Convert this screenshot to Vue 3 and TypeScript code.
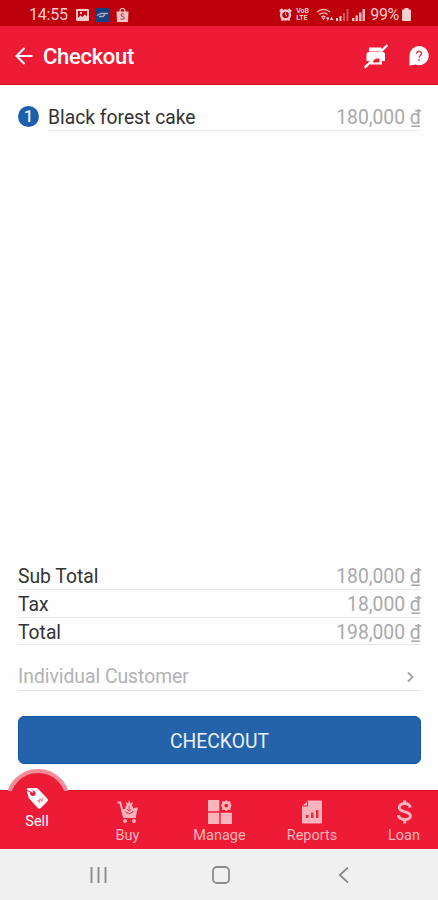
<script setup lang="ts">
interface Row {
  label: string
  amount: string
}

interface Tab {
  id: string
  label: string
}

const totals: Row[] = [
  { label: 'Sub Total', amount: '180,000 ₫' },
  { label: 'Tax', amount: '18,000 ₫' },
  { label: 'Total', amount: '198,000 ₫' },
]

const tabs: Tab[] = [
  { id: 'sell', label: 'Sell' },
  { id: 'buy', label: 'Buy' },
  { id: 'manage', label: 'Manage' },
  { id: 'reports', label: 'Reports' },
  { id: 'loan', label: 'Loan' },
]
</script>

<template>
  <div class="screen">
    <div class="status">
      <span class="time">14:55</span>
      <svg class="s-pic" width="13" height="12" viewBox="0 0 13 12">
        <path fill="#f7c9cb" fill-rule="evenodd" d="M1 0h11a1 1 0 0 1 1 1v10a1 1 0 0 1-1 1H1a1 1 0 0 1-1-1V1a1 1 0 0 1 1-1zM2 2v7l2.500-2.500 2 1.500 2.500-2.500 2 2V2zM4 3h2v2H4z" />
      </svg>
      <svg class="s-app" width="15" height="14" viewBox="0 0 15 14">
        <rect width="15" height="14" rx="1" fill="#17417c" />
        <path d="M2 7.500 6 5.500h7M4 8.500h4l2-2" fill="none" stroke="#b9a9bd" stroke-width="1.300" />
      </svg>
      <svg class="s-bag" width="13" height="14" viewBox="0 0 13 14">
        <path d="M4 4V3a2.500 2.500 0 0 1 5 0v1" fill="none" stroke="#f3c3c5" stroke-width="1.200" />
        <path d="M.5 3.500h12L12 14H1z" fill="#f3c3c5" />
        <path d="M8.300 6.300C7 5.200 4.700 5.700 5 7.200c.3 1.400 3.300 1 3.200 2.800-.1 1.500-2.500 1.700-3.700.6" fill="none" stroke="#c4424b" stroke-width="1.100" />
      </svg>
      <span class="grow" />
      <svg class="s-alarm" width="13" height="13" viewBox="0 0 13 13">
        <circle cx="6.500" cy="7" r="4.500" fill="none" stroke="#f7c9cb" stroke-width="2.400" />
        <path d="M.8 3.500 3.500 1M12.200 3.500 9.500 1M2.500 12.500l1.500-2M10.500 12.500l-1.500-2" stroke="#f7c9cb" stroke-width="2" />
        <path d="M6.500 4.500V7l1.500 1" fill="none" stroke="#f7c9cb" />
      </svg>
      <span class="volte"><span>VoB</span><span>LTE</span></span>
      <svg class="s-wifi" width="18" height="14" viewBox="0 0 18 14">
        <g fill="none" stroke="#f0b2b6" stroke-width="1.500">
          <path d="M1 4a10 10 0 0 1 13 0M3.300 6.500a6.500 6.500 0 0 1 8.400 0M5.500 9a3.500 3.500 0 0 1 4 0" />
        </g>
        <path d="M7.500 12.500 5.500 9.500h4z" fill="#f0b2b6" />
        <path d="M10 9.500h3.500L11.800 13zM14 12l1.500-3.500L17.500 12z" fill="#f7c9cb" />
      </svg>
      <svg class="s-sig" width="13" height="12" viewBox="0 0 13 12">
        <path d="M0 9h2v3H0zM3.500 7h2v5h-2z" fill="#f7c9cb" />
        <path d="M7 4h2v8H7zM10.500 0h2v12h-2z" fill="#d8505a" />
      </svg>
      <svg class="s-sig2" width="13" height="12" viewBox="0 0 13 12">
        <path d="M0 9h2.500v3H0zM3.500 6.500H6V12H3.500zM7 3.500h2.500V12H7zM10.500 0H13v12h-2.500z" fill="#f1b4b8" />
      </svg>
      <span class="pct">99%</span>
      <svg class="s-bat" width="9" height="13" viewBox="0 0 9 13">
        <path d="M2.500 0h4v1.500H8a1 1 0 0 1 1 1V12a1 1 0 0 1-1 1H1a1 1 0 0 1-1-1V2.500a1 1 0 0 1 1-1h1.500z" fill="#f9d0d1" />
      </svg>
    </div>

    <header class="bar">
      <svg class="back" width="18" height="18" viewBox="0 0 18 18">
        <path d="M17.500 9H1.500M9.500 1 1.500 9l8 8" fill="none" stroke="#fff" stroke-width="2" />
      </svg>
      <h1>Checkout</h1>
      <span class="grow" />
      <svg class="printer" width="24" height="25" viewBox="0 0 24 25">
        <path d="M5 3.500h13v4H5z" fill="#fff" />
        <path d="M5 8h13.500A2.500 2.500 0 0 1 21 10.500V17h-3v3.500H6V17H2.500v-6.500A2.500 2.500 0 0 1 5 8z" fill="#fff" />
        <path d="M9 18.500c0-2.500 1.500-4 4-4h2.500v4z" fill="#ed1b35" />
        <path d="M17.500 4.500 21 1" stroke="#ed1b35" stroke-width="1.500" />
        <path d="M.7 23.700 23.500 1" stroke="#fff" stroke-width="2.300" />
      </svg>
      <svg class="help" width="20" height="20" viewBox="0 0 20 20">
        <path d="M10 0a9.600 9.600 0 1 1-3.500 18.500L.5 19.500V10A9.500 9.500 0 0 1 10 0z" fill="#fff" />
        <path d="M7.500 7.700C7.500 4.300 12.700 4.500 12.500 7.600c-.1 1.800-2.500 2-2.500 4.200M10 13.300v1.800" fill="none" stroke="#e0475a" stroke-width="1.500" />
      </svg>
    </header>

    <main class="content">
      <div class="item">
        <span class="qty">1</span>
        <div class="item-line">
          <span>Black forest cake</span>
          <span class="amount">180,000 ₫</span>
        </div>
      </div>

      <div class="totals">
        <div v-for="row in totals" :key="row.label" class="row">
          <span>{{ row.label }}</span>
          <span class="amount">{{ row.amount }}</span>
        </div>
      </div>

      <div class="customer">
        <span>Individual Customer</span>
        <svg width="7" height="12" viewBox="0 0 7 12">
          <path d="M1 1.500 5.500 6 1 10.500" fill="none" stroke="#a2a2a2" stroke-width="1.800" />
        </svg>
      </div>

      <button class="checkout" type="button">CHECKOUT</button>
    </main>

    <nav class="tabs">
      <div class="bump"><span class="disc" /></div>
      <div v-for="tab in tabs" :key="tab.id" class="tab" :class="{ active: tab.id === 'sell' }">
        <svg v-if="tab.id === 'sell'" width="24" height="24" viewBox="0 0 24 24">
          <path d="M3 2 11 2a3 3 0 0 1 2 .8L22.300 12.500a2.200 2.200 0 0 1 0 3L15.800 22a2.200 2.200 0 0 1-3 0L4.500 13a4 4 0 0 1-1-2.200L1.500 4z" fill="#fff" />
          <circle cx="7.800" cy="7.300" r="2.700" fill="#ed1b35" />
          <path d="M.5 4 7.500 6.300" stroke="#ed1b35" stroke-width="1.200" />
          <path d="M2 2.700 8.300 6.200" stroke="#fff" stroke-width="1.200" />
          <path d="m12.500 14 1.800 2 .7-3 2 2 .5-3" fill="none" stroke="#ee8c99" stroke-width="1.300" />
        </svg>
        <svg v-else-if="tab.id === 'buy'" width="24" height="24" viewBox="0 0 24 24">
          <path d="M1.500 2.500h2.800l3.600 14.500H20" fill="none" stroke="#fbb4bb" stroke-width="1.900" />
          <path d="M5 9h4.500l1 3.500 2 1 4-1L17.500 8l4.500-.5L20 16H7z" fill="#fbb4bb" />
          <path d="M10.500 5.500a4 4.300 0 1 0 5.500 0L17 2l-2.300 1.500L13 0l-.8 3.500L10 2z" fill="#fbb4bb" />
          <path d="M13.200 5.500v5M11 9l2.200 2.200L15.400 9M9.300 11.500c2 3 6 3 8-.5" fill="none" stroke="#ed3d51" stroke-width="1" />
          <circle cx="9" cy="21" r="2" fill="#fbb4bb" /><circle cx="18" cy="21" r="2" fill="#fbb4bb" />
        </svg>
        <svg v-else-if="tab.id === 'manage'" width="24" height="24" viewBox="0 0 24 24">
          <path d="M0 0h11.300v11.300H0zM0 12.700h11.300V24H0zM12.700 12.700H24V24H12.700z" fill="#fbb4bb" />
          <path d="m18.300 0 1.700 1.500 2.300-.2.300 2.400 1 1.900-1 1.900-.3 2.400-2.300-.2-1.700 1.500-1.700-1.500-2.300.2-.3-2.400-1-1.900 1-1.900.3-2.400 2.300.2z" fill="#fbb4bb" />
          <circle cx="18.300" cy="5.600" r="1.900" fill="#ed1b35" />
        </svg>
        <svg v-else-if="tab.id === 'reports'" width="24" height="24" viewBox="0 0 24 24">
          <path d="M8 .5h13a1 1 0 0 1 1 1v21a1 1 0 0 1-1 1H3a1 1 0 0 1-1-1V6.500z" fill="#fbb4bb" />
          <path d="M7.500 1.500v4.500H3" fill="none" stroke="#ed1b35" stroke-width="1" />
          <path d="M6 15h2.500v3H6zM11 12.500h2.500V18H11zM16 10h2.500v8H16z" fill="#ed2c43" />
        </svg>
        <svg v-else width="24" height="26" viewBox="0 0 24 26">
          <path d="M18.700 8.300C18.300 2.200 6.800 2.700 6.800 8.200c0 6 12.200 3.300 12.200 9 0 5.700-12.700 5.300-13-.8M12.700.5v4M12.700 21v4.500" fill="none" stroke="#fbb4bb" stroke-width="3.200" />
        </svg>
        <span class="tab-label">{{ tab.label }}</span>
      </div>
    </nav>

    <div class="system">
      <svg width="17" height="18" viewBox="0 0 17 18">
        <path d="M1.500 1v16M8.500 1v16M15.500 1v16" stroke="#8c8c8c" stroke-width="1.900" />
      </svg>
      <svg class="home" width="18" height="18" viewBox="0 0 18 18">
        <rect x="1" y="1" width="16" height="16" rx="4" fill="none" stroke="#8c8c8c" stroke-width="1.800" />
      </svg>
      <svg width="11" height="18" viewBox="0 0 11 18">
        <path d="M10 1.500 1.800 9l8.200 7.500" fill="none" stroke="#8c8c8c" stroke-width="1.800" />
      </svg>
    </div>
  </div>
</template>

<style>
body {
  margin: 0;
}
</style>

<style scoped>
.screen {
  width: 438px;
  height: 900px;
  overflow: hidden;
  display: flex;
  flex-direction: column;
  background: #fefefe;
  font-family: Roboto, "Liberation Sans", sans-serif;
  color: #333;
}
svg {
  display: block;
  flex: none;
}
.grow {
  flex: 1;
}
.status {
  height: 26px;
  flex: none;
  box-sizing: border-box;
  display: flex;
  align-items: center;
  padding: 3px 27px 0 29px;
  background: #be000c;
  color: #f8cccd;
  font-size: 16px;
  line-height: 20px;
}
.time {
  letter-spacing: -0.2px;
}
.s-pic {
  margin-left: 8px;
}
.s-app {
  margin-left: 6px;
}
.s-bag {
  margin-left: 6px;
}
.volte {
  display: flex;
  flex-direction: column;
  width: 13px;
  margin: 0 7px 0 4px;
  font-size: 7px;
  font-weight: 700;
  line-height: 6.500px;
}
.s-sig {
  margin-left: 2px;
}
.s-sig2 {
  margin: 0 5px 0 3px;
}
.s-bat {
  margin-left: 3px;
}
.pct {
  letter-spacing: -0.3px;
}
.bar {
  height: 59px;
  flex: none;
  box-sizing: border-box;
  display: flex;
  align-items: center;
  padding: 2px 9px 0 15px;
  background: #ed1b35;
  border-bottom: 1px solid #df0d23;
}
h1 {
  margin: 2px 0 0 10px;
  font-size: 22px;
  font-weight: 500;
  line-height: 28px;
  letter-spacing: -0.3px;
  color: #fff;
}
.help {
  margin-left: 21px;
}
.content {
  flex: 1;
  min-height: 0;
  display: flex;
  flex-direction: column;
  padding: 19px 17px 26px 18px;
  font-size: 19.300px;
}
.item {
  display: flex;
}
.qty {
  width: 21px;
  height: 21px;
  margin: 2px 9px 0 0;
  border-radius: 50%;
  background: #1b5fae;
  color: #e4eefa;
  font-size: 17px;
  font-weight: 500;
  line-height: 21px;
  text-align: center;
}
.item-line {
  flex: 1;
  height: 26px;
  line-height: 27px;
  display: flex;
  justify-content: space-between;
  border-bottom: 1px solid #ededed;
}
.amount {
  color: #a9a9a9;
}
.totals {
  margin-top: auto;
}
.row {
  height: 27px;
  line-height: 29px;
  display: flex;
  justify-content: space-between;
  border-bottom: 1px solid #e8e8e8;
}
.row:last-child {
  height: 26px;
}
.customer {
  height: 27px;
  line-height: 29px;
  margin-top: 18px;
  display: flex;
  align-items: center;
  justify-content: space-between;
  padding-right: 7px;
  border-bottom: 1px solid #e4e4e4;
  color: #b2b2b2;
}
.checkout {
  height: 48px;
  flex: none;
  margin: 25px 0 0;
  padding: 2px 0 0;
  border: 1px solid #1456a3;
  border-radius: 6px;
  background: #2462aa;
  color: #e9f1fa;
  font: 400 19.300px Roboto, "Liberation Sans", sans-serif;
}
.tabs {
  position: relative;
  height: 59px;
  flex: none;
  width: 458px;
  box-sizing: border-box;
  margin-left: -8px;
  display: grid;
  grid-template-columns: 90px 91px 93px 92px 92px;
  background: #ed1b35;
  border-top: 1px solid #d9081f;
}
.tab {
  position: relative;
  display: flex;
  flex-direction: column;
  align-items: center;
  padding-top: 9px;
  color: #fbb4bb;
  font-size: 14.500px;
  line-height: 18px;
}
.tab > svg {
  height: 24px;
}
.tab-label {
  margin-top: 3px;
}
.active {
  margin-top: -14px;
  color: #fff;
}
.bump {
  position: absolute;
  left: 14px;
  bottom: 100%;
  width: 64px;
  height: 22px;
  overflow: hidden;
}
.disc {
  display: block;
  box-sizing: border-box;
  width: 64px;
  height: 64px;
  border: 4px solid #f58c99;
  border-radius: 50%;
  background: #ed1b35;
}
.system {
  height: 51px;
  flex: none;
  box-sizing: border-box;
  display: flex;
  align-items: center;
  justify-content: space-between;
  padding: 0 89px 0 90px;
  background: #f0f0f0;
}
.home {
  margin-right: 3px;
}
</style>
